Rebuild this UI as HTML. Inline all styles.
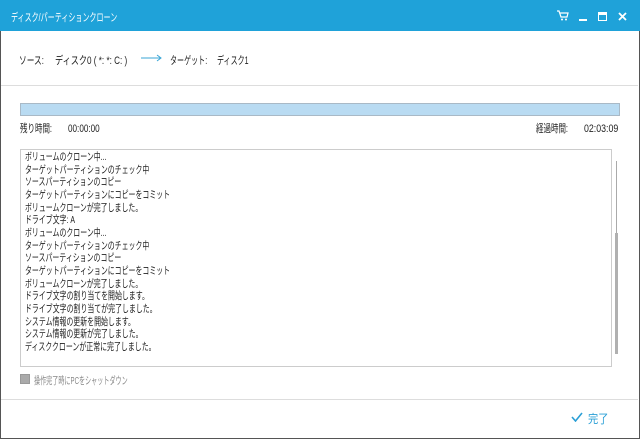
<!DOCTYPE html>
<html><head><meta charset="utf-8"><style>
*{margin:0;padding:0;box-sizing:border-box}
body{width:640px;height:439px;overflow:hidden;background:#fff;font-family:"Liberation Sans","Noto Sans CJK JP",sans-serif;font-size:11px;color:#222;position:relative}
.win{position:absolute;left:0;top:0;width:640px;height:439px;border:1px solid #555;border-top:none;background:#fff}
.title{position:absolute;left:0;top:0;width:640px;height:31px;background:#1fa2d9}
.abs{position:absolute;white-space:nowrap;transform-origin:left center}
.hr{position:absolute;left:1px;width:637px;height:1px;background:#ddd}
.log{position:absolute;left:20px;top:149px;width:592px;height:218px;border:1px solid #ccc}
.logt{position:absolute;left:4px;top:1px;line-height:12.65px;font-size:10.5px;white-space:nowrap;transform:scaleX(0.66);transform-origin:left top}
</style></head><body>
<div class="win"></div>
<div class="title"></div>
<div class="abs" style="left:11px;top:9px;color:#fff;transform:scaleX(0.64)">ディスク/パーティションクローン</div>
<svg class="abs" style="left:557px;top:10px" width="12" height="11" viewBox="0 0 12 11"><path d="M0 1h2l2 6h6l1-4H3" fill="none" stroke="#fff" stroke-width="1.2"/><circle cx="5" cy="9.5" r="1" fill="#fff"/><circle cx="9" cy="9.5" r="1" fill="#fff"/></svg>
<div class="abs" style="left:579px;top:19px;width:8px;height:2px;background:#fff"></div>
<div class="abs" style="left:598px;top:12px;width:9px;height:9px;border:1.5px solid #fff;border-top-width:3px"></div>
<svg class="abs" style="left:618px;top:12px" width="9" height="9" viewBox="0 0 9 9"><path d="M1 1l7 7M8 1l-7 7" stroke="#fff" stroke-width="1.8"/></svg>
<div class="abs" style="left:19px;top:52px;transform:scaleX(0.7)">ソース:</div>
<div class="abs" style="left:55px;top:52px;transform:scaleX(0.74)">ディスク0 ( *: *: C: )</div>
<svg class="abs" style="left:141px;top:54px" width="22" height="8"><path d="M0 4h20M16 1l4 3-4 3" fill="none" stroke="#3aa6d6" stroke-width="1"/></svg>
<div class="abs" style="left:170px;top:52px;transform:scaleX(0.64)">ターゲット:</div>
<div class="abs" style="left:217px;top:52px;transform:scaleX(0.64)">ディスク1</div>
<div class="hr" style="top:85px"></div>
<div class="abs" style="left:20px;top:103px;width:600px;height:13px;background:#b9dbf2;border:1px solid #a9b9c6"></div>
<div class="abs" style="left:20px;top:120px;transform:scaleX(0.68)">残り時間:</div>
<div class="abs" style="left:68px;top:123px;transform:scaleX(0.74)">00:00:00</div>
<div class="abs" style="left:536px;top:120px;transform:scaleX(0.68)">経過時間:</div>
<div class="abs" style="left:584px;top:123px;transform:scaleX(0.8)">02:03:09</div>
<div class="log"><div class="logt">ボリュームのクローン中...<br>ターゲットパーティションのチェック中<br>ソースパーティションのコピー<br>ターゲットパーティションにコピーをコミット<br>ボリュームクローンが完了しました。<br>ドライブ文字: A<br>ボリュームのクローン中...<br>ターゲットパーティションのチェック中<br>ソースパーティションのコピー<br>ターゲットパーティションにコピーをコミット<br>ボリュームクローンが完了しました。<br>ドライブ文字の割り当てを開始します。<br>ドライブ文字の割り当てが完了しました。<br>システム情報の更新を開始します。<br>システム情報の更新が完了しました。<br>ディスククローンが正常に完了しました。</div></div>
<div class="abs" style="left:616px;top:161px;width:1px;height:72px;background:#aaa"></div>
<div class="abs" style="left:615px;top:233px;width:3px;height:121px;background:#b0b0b0"></div>
<div class="abs" style="left:20px;top:374px;width:10px;height:10px;background:#aaa;border:1px solid #999"></div>
<div class="abs" style="left:34px;top:373px;color:#888;font-size:10.5px;transform:scaleX(0.58)">操作完了時にPCをシャットダウン</div>
<div class="hr" style="top:399px"></div>
<svg class="abs" style="left:571px;top:412px" width="12" height="10"><path d="M1 5l3.5 4L11 1" fill="none" stroke="#2a9fd6" stroke-width="1.6"/></svg>
<div class="abs" style="left:588px;top:410px;color:#2a9fd6;font-size:12px;transform:scaleX(0.85)">完了</div>
</body></html>
